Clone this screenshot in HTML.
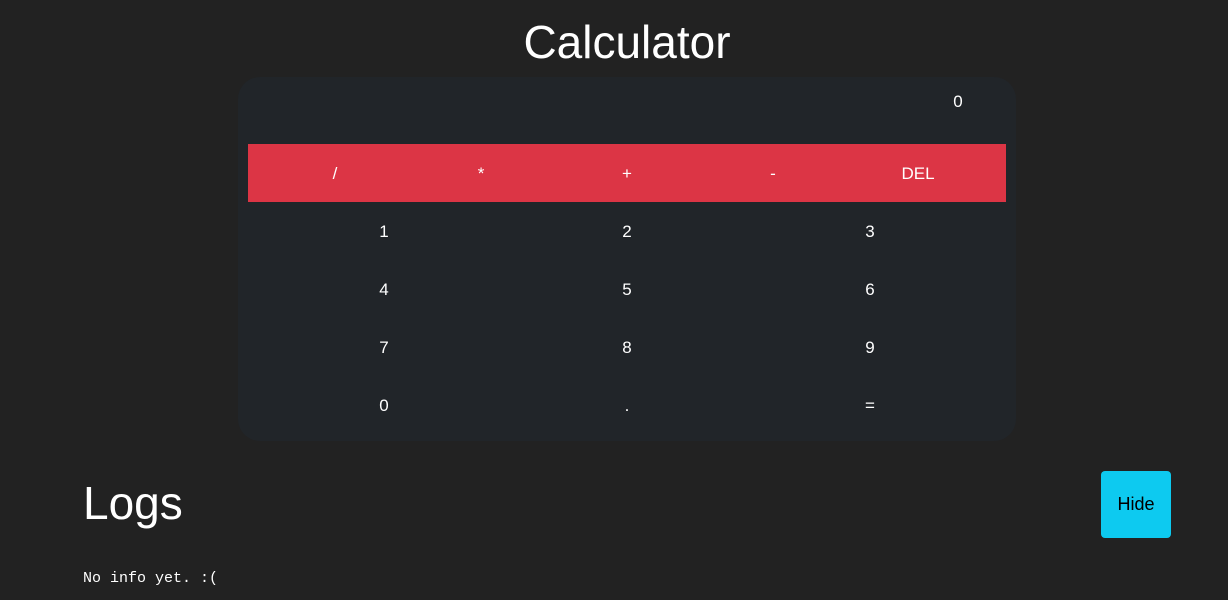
<!DOCTYPE html>
<html><head><meta charset="utf-8"><style>
body{margin:0;width:1228px;height:600px;background:#222222;color:#fff;font-family:"Liberation Sans",sans-serif;position:relative;overflow:hidden}
.a{position:absolute}
.t{transform:translate(-50%,-50%);white-space:nowrap}
h1{position:absolute;margin:0;left:627px;top:42px;transform:translate(-50%,-50%);font-weight:400;font-size:46px}
.card{left:238px;top:77px;width:778px;height:364px;background:#212529;border-radius:22px}
.red{left:248px;top:144px;width:758px;height:58px;background:#dc3545}
.k{font-size:17px}
.hide{left:1101px;top:471px;width:70px;height:67px;background:#0dcaf0;border-radius:4px;color:#000;font-size:18px;display:flex;align-items:center;justify-content:center}
</style></head><body>
<h1>Calculator</h1>
<div class="a card"></div>
<div class="a red"></div>
<div class="a t k" style="left:958px;top:102px">0</div>
<div class="a t k" style="left:335px;top:174px">/</div>
<div class="a t k" style="left:481px;top:174px">*</div>
<div class="a t k" style="left:627px;top:174px">+</div>
<div class="a t k" style="left:773px;top:174px">-</div>
<div class="a t k" style="left:918px;top:174px">DEL</div>
<div class="a t k" style="left:384px;top:232px">1</div><div class="a t k" style="left:627px;top:232px">2</div><div class="a t k" style="left:870px;top:232px">3</div>
<div class="a t k" style="left:384px;top:290px">4</div><div class="a t k" style="left:627px;top:290px">5</div><div class="a t k" style="left:870px;top:290px">6</div>
<div class="a t k" style="left:384px;top:348px">7</div><div class="a t k" style="left:627px;top:348px">8</div><div class="a t k" style="left:870px;top:348px">9</div>
<div class="a t k" style="left:384px;top:406px">0</div><div class="a t k" style="left:627px;top:406px">.</div><div class="a t k" style="left:870px;top:406px">=</div>
<div class="a" style="left:83px;top:477px;font-size:46px;line-height:52px">Logs</div>
<div class="a hide">Hide</div>
<div class="a" style="left:83px;top:570px;font-family:'Liberation Mono',monospace;font-size:15px;line-height:18px">No info yet. :(</div>
</body></html>
